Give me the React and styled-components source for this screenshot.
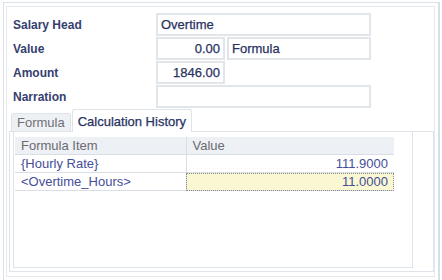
import React, { useState } from "react";
import styled, { createGlobalStyle } from "styled-components";

const GlobalStyle = createGlobalStyle`
  html, body {
    margin: 0;
    padding: 0;
    background: #ffffff;
    overflow: hidden;
  }
  body {
    font-family: "Liberation Sans", Arial, sans-serif;
  }
`;

const OuterFrame = styled.div`
  margin: 2px 0 0 3px;
  width: 434px;
  height: 290px;
  border: 1px solid #dbe2ea;
  border-right: 2px solid #d6e0ea;
  box-sizing: content-box;
`;

const InnerFrame = styled.div`
  margin: 3px 3px 0 2px;
  height: 271px;
  border: 1px solid #e4e9ee;
  padding-top: 6px;
  box-sizing: border-box;
`;

const Form = styled.div`
  display: flex;
  flex-direction: column;
  gap: 1px;
  padding-left: 6px;
`;

const Row = styled.div`
  display: flex;
  align-items: center;
  height: 23px;
`;

const Label = styled.div`
  width: 143px;
  font-size: 12px;
  font-weight: bold;
  color: #35406f;
`;

const Field = styled.div`
  width: ${(p) => p.$w}px;
  height: 23px;
  box-sizing: border-box;
  border: 2px solid #e1e6eb;
  margin-left: ${(p) => p.$ml || 0}px;
  padding: 0 3px;
  display: flex;
  align-items: center;
  justify-content: ${(p) => (p.$right ? "flex-end" : "flex-start")};
  font-size: 13px;
  color: #29325f;
  -webkit-text-stroke: 0.25px #29325f;
`;

const TabStrip = styled.div`
  display: flex;
  align-items: flex-end;
  height: 22px;
  margin-top: 1px;
  padding-left: 4px;
`;

const Tab = styled.div`
  height: ${(p) => (p.$active ? 23 : 18)}px;
  box-sizing: border-box;
  padding: 0 5px;
  margin-right: 1px;
  border: 1px solid #dfe4ea;
  border-bottom: none;
  border-radius: 3px 3px 0 0;
  background: ${(p) => (p.$active ? "#ffffff" : "#eef1f4")};
  color: ${(p) => (p.$active ? "#29325f" : "#6f6f78")};
  -webkit-text-stroke: ${(p) => (p.$active ? "0.25px #29325f" : "0")};
  font-size: 13px;
  display: flex;
  align-items: center;
  margin-bottom: ${(p) => (p.$active ? -1 : 0)}px;
  position: relative;
  z-index: ${(p) => (p.$active ? 1 : 0)};
  cursor: pointer;
`;

const TabPage = styled.div`
  margin-left: 2px;
  width: 425px;
  height: 141px;
  box-sizing: border-box;
  border: 1px solid #dfe4ea;
  padding: 0 20px 3px 3px;
`;

const GridBox = styled.div`
  height: 100%;
  box-sizing: border-box;
  border: 1px solid #dfe4ea;
  border-top: none;
  padding: 5px 18px 0 1px;
`;

const Table = styled.table`
  width: 100%;
  border-collapse: collapse;
  table-layout: fixed;
  font-size: 13px;
`;

const Th = styled.th`
  height: 17px;
  padding: 0 6px;
  background: #edf0f4;
  color: #6b6a70;
  font-weight: normal;
  text-align: left;
  border-right: 1px solid #d9dee4;
  border-bottom: 1px solid #d9dee4;
  &:last-child {
    border-right: none;
  }
`;

const Td = styled.td`
  height: 17px;
  padding: 0 6px;
  color: #454e98;
  text-align: ${(p) => (p.$right ? "right" : "left")};
  background: ${(p) => (p.$focus ? "#f9f8d2" : "transparent")};
  border-right: 1px solid #d9dee4;
  border-bottom: 1px solid #d9dee4;
  outline: ${(p) => (p.$focus ? "1px dotted #8a8a8a" : "none")};
  outline-offset: -1px;
  &:last-child {
    border-right: none;
  }
`;

const rows = [
  { item: "{Hourly Rate}", value: "111.9000" },
  { item: "<Overtime_Hours>", value: "11.0000", focus: true },
];

export default function App() {
  const [tab, setTab] = useState(1);
  return (
    <>
      <GlobalStyle />
      <OuterFrame>
        <InnerFrame>
          <Form>
            <Row>
              <Label>Salary Head</Label>
              <Field $w={215}>Overtime</Field>
            </Row>
            <Row>
              <Label>Value</Label>
              <Field $w={69} $right>
                0.00
              </Field>
              <Field $w={144} $ml={2}>
                Formula
              </Field>
            </Row>
            <Row>
              <Label>Amount</Label>
              <Field $w={69} $right>
                1846.00
              </Field>
            </Row>
            <Row>
              <Label>Narration</Label>
              <Field $w={215} />
            </Row>
          </Form>
          <TabStrip>
            <Tab $active={tab === 0} onClick={() => setTab(0)}>
              Formula
            </Tab>
            <Tab $active={tab === 1} onClick={() => setTab(1)}>
              Calculation History
            </Tab>
          </TabStrip>
          <TabPage>
            <GridBox>
              <Table>
                <colgroup>
                  <col style={{ width: 171 }} />
                  <col />
                </colgroup>
                <thead>
                  <tr>
                    <Th>Formula Item</Th>
                    <Th>Value</Th>
                  </tr>
                </thead>
                <tbody>
                  {rows.map((r) => (
                    <tr key={r.item}>
                      <Td>{r.item}</Td>
                      <Td $right $focus={r.focus}>
                        {r.value}
                      </Td>
                    </tr>
                  ))}
                </tbody>
              </Table>
            </GridBox>
          </TabPage>
        </InnerFrame>
      </OuterFrame>
    </>
  );
}
